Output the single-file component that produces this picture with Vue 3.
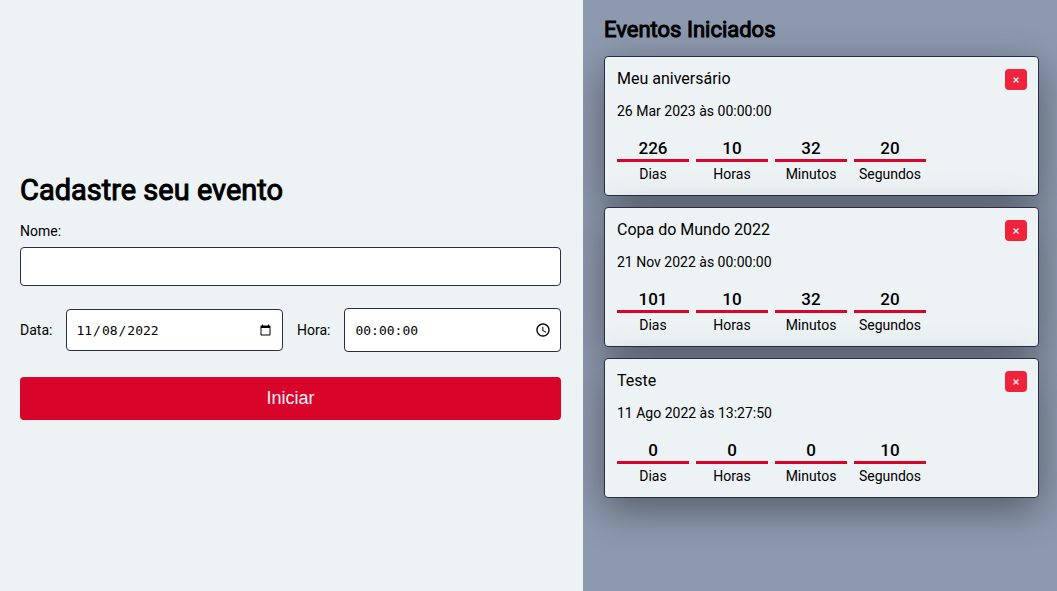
<script setup>
import { ref } from 'vue'

const nome = ref('')
const data = ref('2022-11-08')
const hora = ref('00:00:00')

const unidades = ['Dias', 'Horas', 'Minutos', 'Segundos']

const eventos = ref([
  { id: 1, nome: 'Meu aniversário', quando: '26 Mar 2023 às 00:00:00', restante: [226, 10, 32, 20] },
  { id: 2, nome: 'Copa do Mundo 2022', quando: '21 Nov 2022 às 00:00:00', restante: [101, 10, 32, 20] },
  { id: 3, nome: 'Teste', quando: '11 Ago 2022 às 13:27:50', restante: [0, 0, 0, 10] },
])

function remover(id) {
  eventos.value = eventos.value.filter((evento) => evento.id !== id)
}
</script>

<template>
  <main class="page">
    <section class="register">
      <form class="form" @submit.prevent>
        <h1 class="form-title">Cadastre seu evento</h1>
        <label class="label" for="nome">Nome:</label>
        <input id="nome" v-model="nome" class="input name" type="text" />
        <div class="row">
          <label class="label" for="data">Data:</label>
          <input id="data" v-model="data" class="input date" type="date" />
          <label class="label" for="hora">Hora:</label>
          <div class="time">
            <input id="hora" v-model="hora" class="input time-input" type="text" />
            <svg class="clock" viewBox="0 0 24 24" aria-hidden="true">
              <path
                d="M11.99 2C6.47 2 2 6.48 2 12s4.47 10 9.99 10C17.52 22 22 17.52 22 12S17.52 2 11.99 2zM12 20c-4.42 0-8-3.58-8-8s3.58-8 8-8 8 3.58 8 8-3.58 8-8 8zm.5-13H11v6l5.25 3.15.75-1.23-4.5-2.67z"
              />
            </svg>
          </div>
        </div>
        <button class="submit" type="submit">Iniciar</button>
      </form>
    </section>

    <section class="events">
      <h2 class="events-title">Eventos Iniciados</h2>
      <article v-for="evento in eventos" :key="evento.id" class="card">
        <header class="card-head">
          <h3 class="card-title">{{ evento.nome }}</h3>
          <button class="remove" type="button" aria-label="Remover evento" @click="remover(evento.id)">
            <svg class="cross" viewBox="0 0 6 6" aria-hidden="true">
              <path d="M0.5 0.5 5.5 5.5M5.5 0.5 0.5 5.5" />
            </svg>
          </button>
        </header>
        <p class="when">{{ evento.quando }}</p>
        <div class="counter">
          <div v-for="(valor, i) in evento.restante" :key="unidades[i]" class="unit">
            <strong class="value">{{ valor }}</strong>
            <span class="unit-name">{{ unidades[i] }}</span>
          </div>
        </div>
      </article>
    </section>
  </main>
</template>

<style>
body {
  margin: 0;
}
</style>

<style scoped>
.page {
  display: grid;
  grid-template-columns: minmax(0, 123fr) minmax(0, 100fr);
  min-height: 100vh;
  font-family: Roboto, "Liberation Sans", sans-serif;
  font-size: 14px;
  font-weight: 400;
  color: #000;
}

.page * {
  box-sizing: border-box;
}

.register {
  display: flex;
  flex-direction: column;
  justify-content: center;
  padding: 0 22px 0 20px;
  background: #edf2f4;
}

.form {
  display: flex;
  flex-direction: column;
}

.form-title {
  margin: 0 0 12px;
  font-size: 29px;
  line-height: 38px;
  font-weight: 400;
  -webkit-text-stroke: 1px #000;
}

.label {
  line-height: 20px;
}

.input {
  min-width: 0;
  border: 1px solid #2b2d42;
  border-radius: 4px;
  background: #fff;
  color: #000;
  font-family: "DejaVu Sans Mono", monospace;
  font-size: 13px;
  outline: none;
}

.name {
  height: 39px;
  margin-top: 6px;
  padding: 0 8px;
}

.row {
  display: grid;
  grid-template-columns: auto minmax(0, 1fr) auto minmax(0, 1fr);
  column-gap: 14px;
  align-items: center;
  margin: 22px 0 25px;
}

.date {
  width: 100%;
  height: 42px;
  padding: 0 8px;
}

.time {
  position: relative;
}

.time-input {
  display: block;
  width: 100%;
  height: 44px;
  padding: 0 32px 0 10px;
}

.clock {
  position: absolute;
  top: 14px;
  right: 10px;
  width: 16px;
  height: 16px;
  fill: #000;
}

.submit {
  height: 43px;
  border: 0;
  border-radius: 4px;
  background: #d90429;
  color: #edf2f4;
  font-family: "Liberation Sans", Arial, sans-serif;
  font-size: 18px;
  cursor: pointer;
}

.events {
  display: flex;
  flex-direction: column;
  gap: 11px;
  padding: 16px 18px 16px 21px;
  overflow: hidden;
  background: #8d99ae;
}

.events-title {
  margin: 0 0 1px;
  font-size: 22px;
  line-height: 28px;
  font-weight: 400;
  -webkit-text-stroke: 1px #000;
}

.card {
  padding: 12px 11px 12px 12px;
  border: 1px solid #2b2d42;
  border-radius: 4px;
  background: #edf2f4;
  box-shadow: 0 12px 40px rgba(0, 0, 0, 0.4);
}

.card-head {
  display: flex;
  justify-content: space-between;
  align-items: flex-start;
}

.card-title {
  margin: 0;
  font-size: 16px;
  line-height: 20px;
  font-weight: 400;
}

.remove {
  display: grid;
  place-items: center;
  width: 22px;
  height: 21px;
  padding: 0;
  border: 0;
  border-radius: 4px;
  background: #ef233c;
  cursor: pointer;
}

.cross {
  width: 6px;
  height: 6px;
  fill: none;
  stroke: #edf2f4;
  stroke-width: 1.3;
}

.when {
  margin: 11px 0 16px;
  line-height: 20px;
}

.counter {
  display: flex;
  gap: 7px;
}

.unit {
  width: 72px;
  text-align: center;
}

.value {
  display: block;
  border-bottom: 3px solid #d90429;
  font-size: 17px;
  line-height: 22px;
  font-weight: 500;
}

.unit-name {
  display: block;
  margin-top: 3px;
  line-height: 18px;
}
</style>
